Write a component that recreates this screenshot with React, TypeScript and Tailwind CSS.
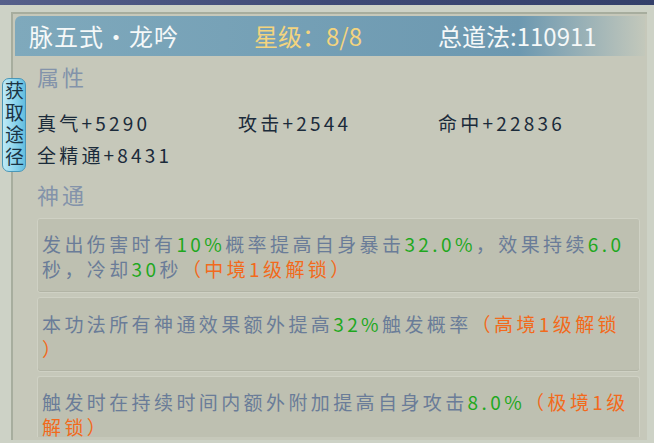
import React from "react";

const G = ({ children }: { children: React.ReactNode }) => (
  <span className="text-[#1ea81e]">{children}</span>
);
const O = ({ children }: { children: React.ReactNode }) => (
  <span className="text-[#f26a1c]">{children}</span>
);

export default function App() {
  return (
    <div className="relative w-[654px] h-[443px] overflow-hidden bg-[#cdd2c6] font-['Noto_Sans_CJK_SC','Noto_Sans',sans-serif]">
      <div className="h-[5px] bg-gradient-to-r from-[#56608a] via-[#3e4a76] to-[#34406a]" />
      <div className="flex h-[438px] pl-[11px] pt-[7px] pr-[7px] pb-[3px]">
        <div className="flex-1 flex flex-col border-l-2 border-t-2 border-[#a7ad9e] bg-[#c6c8ba]">
          {/* header */}
          <div className="mx-[2px] mt-[2px] h-[40px] flex items-center rounded-tl-[6px] bg-gradient-to-r from-[#7fa9bc] via-[#6c98b0] via-80% to-[#c3c8bb] text-[24px] leading-none text-[#f5f8f8]">
            <span className="ml-[14px] w-[225px] tracking-[1px] whitespace-nowrap">脉五式・龙吟</span>
            <span className="w-[184px] text-[#f3d47e] whitespace-nowrap">星级：8/8</span>
            <span className="whitespace-nowrap">总道法:110911</span>
          </div>

          <div className="pl-[24px] pr-[7px]">
            <div className="mt-[9px] h-[22px] text-[22px] leading-[22px] tracking-[3px] text-[#8393aa]">属性</div>
            <div className="mt-[20px] grid grid-cols-[201px_200px_auto] text-[19px] leading-[32px] tracking-[3.2px] text-[#1b2b3a]">
              <span>真气+5290</span>
              <span>攻击+2544</span>
              <span>命中+22836</span>
              <span>全精通+8431</span>
            </div>
            <div className="mt-[12px] h-[22px] text-[22px] leading-[22px] tracking-[3px] text-[#8393aa]">神通</div>

            <div className="mt-[13px] flex flex-col gap-[4px] text-[19px] leading-[25px] tracking-[3.4px] text-[#6a7c98] whitespace-nowrap">
              <div className="h-[75px] pt-[12px] pl-[4px] rounded-[3px] bg-[#bec0b1] border border-[#cfd1c4] shadow-[inset_0_-1px_0_#b2b4a5]">
                发出伤害时有<G>10%</G>概率提高自身暴击<G>32.0%</G>，效果持续<G>6.0</G>
                <br />
                秒，冷却<G>30</G>秒<O>（中境1级解锁）</O>
              </div>
              <div className="h-[75px] pt-[13px] pl-[4px] rounded-[3px] bg-[#bec0b1] border border-[#cfd1c4] shadow-[inset_0_-1px_0_#b2b4a5]">
                本功法所有神通效果额外提高<G>32%</G>触发概率<O>（高境1级解锁</O>
                <br />
                <O>）</O>
              </div>
              <div className="h-[61px] pt-[12px] pl-[4px] rounded-t-[3px] bg-[#bec0b1] border border-b-0 border-[#cfd1c4]">
                触发时在持续时间内额外附加提高自身攻击<G>8.0%</G><O>（极境1级</O>
                <br />
                <O>解锁）</O>
              </div>
            </div>
          </div>
        </div>
      </div>

      {/* side tab */}
      <div className="absolute left-[2px] top-[78px] w-[24px] h-[94px] flex items-center justify-center rounded-[7px] border border-[#4a97b8] bg-gradient-to-r from-[#bfeaf6] via-[#8fd6ee] to-[#62bde0] text-[#1a3344]">
        <span className="[writing-mode:vertical-rl] text-[19px] leading-[22px] tracking-[3px]">获取途径</span>
      </div>
    </div>
  );
}
